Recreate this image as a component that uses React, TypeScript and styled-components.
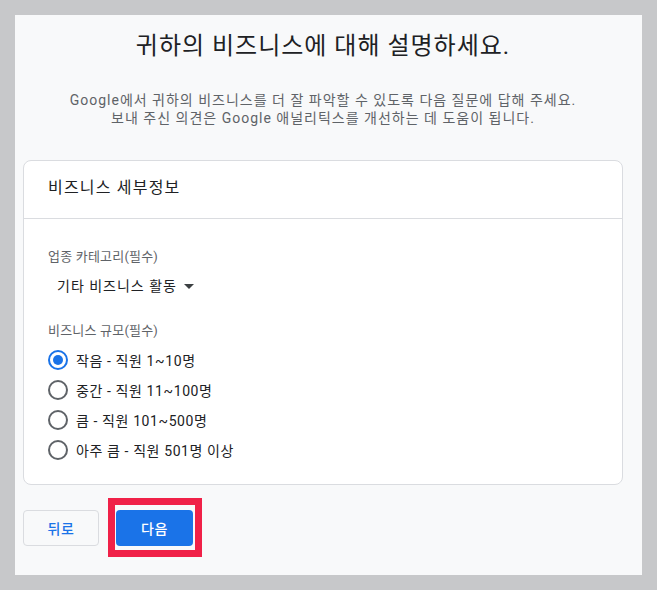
import styled, { createGlobalStyle } from 'styled-components';

const GlobalStyle = createGlobalStyle`
  html, body {
    margin: 0;
    padding: 0;
    background: #c7c8ca;
  }
  body {
    font-family: Roboto, "Noto Sans CJK KR", "Noto Sans", sans-serif;
    color: #202124;
  }
`;

const sizes = [
  { label: '작음 - 직원 1~10명', checked: true },
  { label: '중간 - 직원 11~100명', checked: false },
  { label: '큼 - 직원 101~500명', checked: false },
  { label: '아주 큼 - 직원 501명 이상', checked: false },
];

export default function App() {
  return (
    <>
      <GlobalStyle />
      <Frame>
        <Panel>
          <Title>귀하의 비즈니스에 대해 설명하세요.</Title>
          <Subtitle>
            Google에서 귀하의 비즈니스를 더 잘 파악할 수 있도록 다음 질문에 답해 주세요.
            <br />
            보내 주신 의견은 Google 애널리틱스를 개선하는 데 도움이 됩니다.
          </Subtitle>

          <Card>
            <CardHeader>비즈니스 세부정보</CardHeader>
            <CardBody>
              <FieldLabel>업종 카테고리(필수)</FieldLabel>
              <Dropdown>
                기타 비즈니스 활동
                <svg width="10" height="5" viewBox="0 0 10 5">
                  <path d="M0 0h10L5 5z" fill="#3c4043" />
                </svg>
              </Dropdown>

              <FieldLabel $top={26}>비즈니스 규모(필수)</FieldLabel>
              <RadioList>
                {sizes.map(item => (
                  <RadioRow key={item.label}>
                    <RadioCircle $checked={item.checked} />
                    {item.label}
                  </RadioRow>
                ))}
              </RadioList>
            </CardBody>
          </Card>

          <Actions>
            <BackButton>뒤로</BackButton>
            <Highlight>
              <NextButton>다음</NextButton>
            </Highlight>
          </Actions>
        </Panel>
      </Frame>
    </>
  );
}

const Frame = styled.div`
  padding: 15px;
`;

const Panel = styled.div`
  box-sizing: border-box;
  width: 627px;
  height: 560px;
  background: #f8f9fa;
  padding: 15px 19px 0 8px;
`;

const Title = styled.h1`
  margin: 0;
  text-align: center;
  font-size: 24px;
  line-height: 32px;
  font-weight: 400;
  letter-spacing: 1px;
  color: #202124;
`;

const Subtitle = styled.p`
  margin: 29px 0 0;
  text-align: center;
  font-size: 14px;
  line-height: 18px;
  letter-spacing: 1px;
  color: #5f6368;
`;

const Card = styled.div`
  box-sizing: border-box;
  margin-top: 33px;
  width: 600px;
  background: #fff;
  border: 1px solid #dadce0;
  border-radius: 8px;
`;

const CardHeader = styled.div`
  padding: 16px 24px 19px;
  font-size: 16px;
  line-height: 22px;
  letter-spacing: 1.2px;
  color: #202124;
  border-bottom: 1px solid #dadce0;
`;

const CardBody = styled.div`
  padding: 29px 24px 19px;
`;

const FieldLabel = styled.div<{ $top?: number }>`
  margin-top: ${p => p.$top ?? 0}px;
  font-size: 13px;
  line-height: 18px;
  letter-spacing: 0.2px;
  color: #5f6368;
`;

const Dropdown = styled.div`
  display: inline-flex;
  align-items: center;
  gap: 7px;
  margin: 10px 0 0 9px;
  font-size: 14px;
  line-height: 20px;
  letter-spacing: 1px;
  color: #202124;
  cursor: pointer;
`;

const RadioList = styled.div`
  margin-top: 5px;
  display: flex;
  flex-direction: column;
`;

const RadioRow = styled.label`
  display: flex;
  align-items: center;
  gap: 8px;
  height: 30px;
  font-size: 14px;
  letter-spacing: 0.6px;
  color: #202124;
`;

const RadioCircle = styled.span<{ $checked: boolean }>`
  box-sizing: border-box;
  width: 20px;
  height: 20px;
  border-radius: 50%;
  border: 2px solid ${p => (p.$checked ? '#1a73e8' : '#5f6368')};
  display: flex;
  align-items: center;
  justify-content: center;

  &::after {
    content: '';
    width: 10px;
    height: 10px;
    border-radius: 50%;
    background: ${p => (p.$checked ? '#1a73e8' : 'transparent')};
  }
`;

const Actions = styled.div`
  margin-top: 25px;
  display: flex;
  gap: 17px;
`;

const ButtonBase = styled.button`
  box-sizing: border-box;
  height: 36px;
  width: 76px;
  border-radius: 4px;
  font-family: inherit;
  font-size: 14px;
  font-weight: 500;
  letter-spacing: 0.5px;
  cursor: pointer;
`;

const BackButton = styled(ButtonBase)`
  background: #f8f9fa;
  border: 1px solid #dadce0;
  color: #1a73e8;
`;

const NextButton = styled(ButtonBase)`
  width: 77px;
  background: #1a73e8;
  border: none;
  color: #fff;
`;

const Highlight = styled.div`
  position: relative;

  &::before {
    content: '';
    position: absolute;
    top: -12px;
    left: -8px;
    right: -9px;
    bottom: -11px;
    border: 7px solid #f02148;
    pointer-events: none;
  }
`;
